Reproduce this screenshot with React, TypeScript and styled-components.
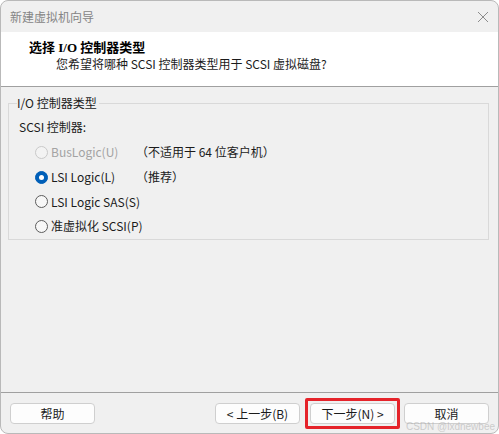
import { FC } from 'react';
import styled, { createGlobalStyle } from 'styled-components';

const GlobalStyle = createGlobalStyle`
  html, body {
    margin: 0;
    padding: 0;
    background: #ffffff;
  }
  body {
    font-family: "Noto Sans CJK SC", "Noto Sans", sans-serif;
    font-size: 12px;
    color: #1b1b1b;
  }
`;

const Window = styled.div`
  position: relative;
  box-sizing: border-box;
  width: 499px;
  height: 434px;
  border: 1px solid #b9b9b9;
  border-radius: 8px;
  overflow: hidden;
  background: #f0f0f0;
  display: flex;
  flex-direction: column;
`;

const TitleBar = styled.div`
  height: 31px;
  display: flex;
  align-items: center;
  justify-content: space-between;
  padding: 0 9px 0 9px;
  color: #858585;
  line-height: 16px;
`;

const Header = styled.div`
  background: #ffffff;
  height: 55px;
  border-bottom: 1px solid #a0a0a0;
  display: flex;
  flex-direction: column;
  padding: 8px 0 0 28px;
  box-sizing: border-box;
`;

const HeaderTitle = styled.div`
  font-family: "Liberation Serif", "Noto Sans CJK SC", serif;
  font-weight: bold;
  font-size: 13px;
  line-height: 16px;
  color: #000;
`;

const HeaderSub = styled.div`
  padding-left: 27px;
  line-height: 16px;
  color: #1b1b1b;
`;

const Body = styled.div`
  flex: 1;
  padding: 8px 9px 0 7px;
`;

const Group = styled.fieldset`
  margin: 0;
  padding: 0 0 3px 10px;
  border: 1px solid #d9d9d9;
  height: 145px;
  box-sizing: border-box;
`;

const Legend = styled.legend`
  padding: 0 2px 0 0;
  margin-left: -2px;
  line-height: 16px;
`;

const GroupCaption = styled.div`
  line-height: 16px;
  margin-top: 8px;
  margin-bottom: 5px;
`;

const OptionRow = styled.div`
  display: grid;
  grid-template-columns: 117px 1fr;
  align-items: center;
  height: 24.7px;
`;

const OptionLabel = styled.label<{ $disabled?: boolean }>`
  display: flex;
  align-items: center;
  gap: 3px;
  padding-left: 16px;
  white-space: nowrap;
  color: ${p => (p.$disabled ? '#a3a3a3' : '#1b1b1b')};
  line-height: 16px;
`;

const RadioDot = styled.span<{ $checked?: boolean; $disabled?: boolean }>`
  box-sizing: border-box;
  width: 13px;
  height: 13px;
  border-radius: 50%;
  flex: none;
  display: flex;
  align-items: center;
  justify-content: center;
  background: ${p => (p.$checked ? '#005fb8' : p.$disabled ? '#f3f3f3' : '#f7f7f7')};
  border: 1px solid ${p => (p.$checked ? '#005fb8' : p.$disabled ? '#c9c9c9' : '#5c5c5c')};
  &::after {
    content: '';
    display: ${p => (p.$checked ? 'block' : 'none')};
    width: 5px;
    height: 5px;
    border-radius: 50%;
    background: #ffffff;
  }
`;

const Note = styled.span`
  line-height: 16px;
  white-space: nowrap;
`;

const Footer = styled.div`
  height: 41px;
  border-top: 1px solid #a0a0a0;
  display: flex;
  align-items: center;
  padding: 0 9px 0 9px;
  box-sizing: border-box;
`;

const Spacer = styled.div`
  flex: 1;
`;

const Button = styled.button<{ $gap?: number }>`
  width: 85px;
  height: 21px;
  margin-left: ${p => p.$gap ?? 0}px;
  margin-top: 1px;
  background: #fdfdfd;
  border: 1px solid #cfcfcf;
  border-radius: 4px;
  font-family: "Noto Sans CJK SC", "Noto Sans", sans-serif;
  font-size: 12px;
  line-height: 16px;
  color: #1b1b1b;
  padding: 0;
`;

const Highlight = styled.span`
  display: flex;
  margin: 1px -6px 0 5px;
  padding: 2px;
  border: 3px solid #e5232a;
  border-radius: 2px;
  > button {
    margin-top: 0;
  }
`;

const Watermark = styled.div`
  position: absolute;
  right: 3px;
  bottom: 1px;
  font-family: "Liberation Sans", "Noto Sans", sans-serif;
  font-size: 10px;
  color: rgba(165, 165, 165, 0.5);
  pointer-events: none;
`;

const CloseIcon: FC = () => (
  <svg width="12" height="12" viewBox="0 0 12 12" style={{ marginTop: 1 }}>
    <path d="M1 1 L11 11 M11 1 L1 11" stroke="#8c8c8c" strokeWidth="1" fill="none" />
  </svg>
);

type Option = { label: string; note?: string; checked?: boolean; disabled?: boolean };

const options: Option[] = [
  { label: 'BusLogic(U)', note: '（不适用于 64 位客户机）', disabled: true },
  { label: 'LSI Logic(L)', note: '（推荐）', checked: true },
  { label: 'LSI Logic SAS(S)' },
  { label: '准虚拟化 SCSI(P)' },
];

export default function App() {
  return (
    <>
      <GlobalStyle />
      <Window>
        <TitleBar>
          <span>新建虚拟机向导</span>
          <CloseIcon />
        </TitleBar>
        <Header>
          <HeaderTitle>选择 I/O 控制器类型</HeaderTitle>
          <HeaderSub>您希望将哪种 SCSI 控制器类型用于 SCSI 虚拟磁盘?</HeaderSub>
        </Header>
        <Body>
          <Group>
            <Legend>I/O 控制器类型</Legend>
            <GroupCaption>SCSI 控制器:</GroupCaption>
            {options.map(o => (
              <OptionRow key={o.label}>
                <OptionLabel $disabled={o.disabled}>
                  <RadioDot $checked={o.checked} $disabled={o.disabled} />
                  {o.label}
                </OptionLabel>
                {o.note && <Note>{o.note}</Note>}
              </OptionRow>
            ))}
          </Group>
        </Body>
        <Footer>
          <Button>帮助</Button>
          <Spacer />
          <Button>&lt; 上一步(B)</Button>
          <Highlight>
            <Button>下一步(N) &gt;</Button>
          </Highlight>
          <Button $gap={10}>取消</Button>
        </Footer>
        <Watermark>CSDN @lxdnewbee</Watermark>
      </Window>
    </>
  );
}
